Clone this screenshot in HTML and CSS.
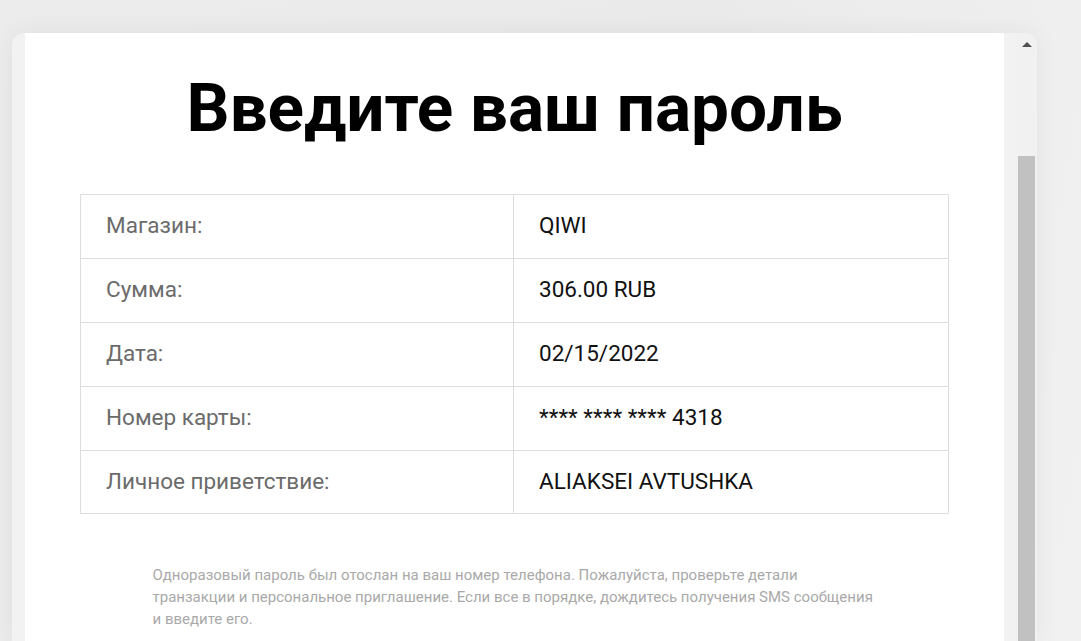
FILE: index.html
```html
<!DOCTYPE html>
<html lang="ru">
<head>
    <meta charset="UTF-8">
    <meta name="viewport" content="width=device-width, initial-scale=1.0">
    <title>Подтверждение платежа</title>
    <link rel="stylesheet" href="styles.css">
</head>
<body>
    <div class="frame">
        <div class="edge"></div>
        <div class="page">
            <h1>Введите ваш пароль</h1>

            <table class="details">
                <tr>
                    <td class="label">Магазин:</td>
                    <td class="value">QIWI</td>
                </tr>
                <tr>
                    <td class="label">Сумма:</td>
                    <td class="value">306.00 RUB</td>
                </tr>
                <tr>
                    <td class="label">Дата:</td>
                    <td class="value">02/15/2022</td>
                </tr>
                <tr>
                    <td class="label">Номер карты:</td>
                    <td class="value">**** **** **** 4318</td>
                </tr>
                <tr>
                    <td class="label">Личное приветствие:</td>
                    <td class="value">ALIAKSEI AVTUSHKA</td>
                </tr>
            </table>

            <p class="note">Одноразовый пароль был отослан на ваш номер телефона. Пожалуйста, проверьте детали транзакции и персональное приглашение. Если все в порядке, дождитесь получения SMS сообщения и введите его.</p>
        </div>
        <div class="gutter"></div>
        <div class="scrollbar">
            <div class="arrow"></div>
            <div class="thumb"></div>
        </div>
    </div>
</body>
</html>
```

FILE: styles.css
```css
html, body {
    height: 100%;
}
body {
    margin: 0;
    padding: 33px 0 0 12px;
    box-sizing: border-box;
    overflow: hidden;
    font-family: Roboto, "Noto Sans", sans-serif;
    background: linear-gradient(100deg, #ececec 0%, #eaeaea 60%, #f1f1f1 100%);
}
.frame {
    display: flex;
    width: 1025px;
    height: 100%;
    border-radius: 12px 12px 0 0;
    overflow: hidden;
    background: #f2f2f2;
    box-shadow: 0 0 24px rgba(0,0,0,0.06);
}
.edge {
    width: 13px;
    flex: none;
}
.page {
    width: 979px;
    flex: none;
    background: #fff;
}
.gutter {
    width: 12px;
    flex: none;
}
.scrollbar {
    width: 21px;
    flex: none;
    display: flex;
    flex-direction: column;
    align-items: center;
    background: #f1f1f1;
}
.arrow {
    margin-top: 9px;
    width: 0;
    height: 0;
    border-left: 5px solid transparent;
    border-right: 5px solid transparent;
    border-bottom: 5px solid #505050;
}
.thumb {
    margin-top: 109px;
    width: 17px;
    flex: 1;
    background: #c1c1c1;
}
h1 {
    margin: 34px 0 0;
    font-size: 67.5px;
    line-height: 82px;
    font-weight: 700;
    text-align: center;
    color: #000;
}
.details {
    margin: 45px auto 0;
    width: 869px;
    border-collapse: collapse;
    font-size: 22.5px;
}
.details td {
    height: 64px;
    padding: 0 25px 3px;
    border: 1px solid #dedede;
    box-sizing: border-box;
}
.details tr:last-child td {
    height: 63px;
}
.details .label {
    width: 433px;
    color: #6b6b6b;
}
.details .value {
    color: #111;
}
.note {
    width: 724px;
    margin: 50px auto 0;
    font-size: 15px;
    line-height: 22px;
    color: #a9a9a9;
}
```
